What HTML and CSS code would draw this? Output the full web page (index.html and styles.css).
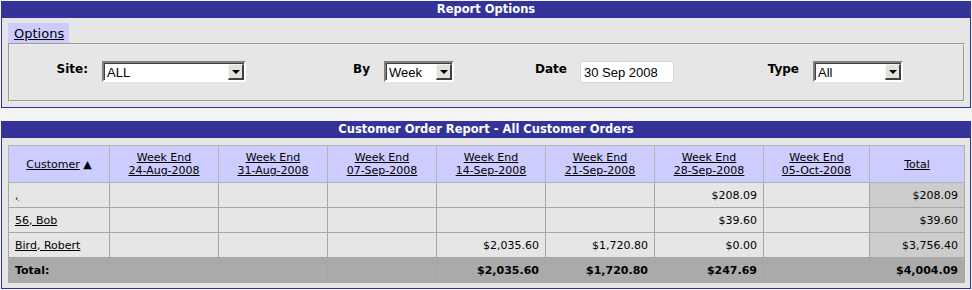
FILE: index.html
```html
<!DOCTYPE html>
<html lang="en">
<head>
    <meta charset="UTF-8">
    <title>Customer Order Report</title>
    <link rel="stylesheet" href="styles.css">
</head>
<body>

<div class="panel options-panel">
    <div class="panel-title">Report Options</div>
    <div class="panel-body">
        <div class="tab"><a href="#">Options</a></div>
        <div class="fieldset">
            <div class="filters">
                <label>Site:</label>
                <div><span class="dropdown dd-site"><span class="value">ALL</span><span class="btn"></span></span></div>
                <label>By</label>
                <div><span class="dropdown dd-by"><span class="value">Week</span><span class="btn"></span></span></div>
                <label>Date</label>
                <div><input class="date" type="text" value="30 Sep 2008"></div>
                <label>Type</label>
                <div><span class="dropdown dd-type"><span class="value">All</span><span class="btn"></span></span></div>
            </div>
        </div>
    </div>
</div>

<div class="panel report-panel">
    <div class="panel-title">Customer Order Report - All Customer Orders</div>
    <div class="panel-body">
        <table class="report">
            <colgroup>
                <col class="c-cust">
                <col class="c-week"><col class="c-week"><col class="c-week">
                <col class="c-week"><col class="c-week"><col class="c-week">
                <col class="c-last">
                <col class="c-total">
            </colgroup>
            <thead>
                <tr>
                    <th><a href="#">Customer</a> <span class="sort">&#9650;</span></th>
                    <th><a href="#">Week End<br>24-Aug-2008</a></th>
                    <th><a href="#">Week End<br>31-Aug-2008</a></th>
                    <th><a href="#">Week End<br>07-Sep-2008</a></th>
                    <th><a href="#">Week End<br>14-Sep-2008</a></th>
                    <th><a href="#">Week End<br>21-Sep-2008</a></th>
                    <th><a href="#">Week End<br>28-Sep-2008</a></th>
                    <th><a href="#">Week End<br>05-Oct-2008</a></th>
                    <th><a href="#">Total</a></th>
                </tr>
            </thead>
            <tbody>
                <tr>
                    <td class="name"><a href="#">,</a></td>
                    <td></td><td></td><td></td><td></td><td></td>
                    <td>$208.09</td>
                    <td></td>
                    <td class="total">$208.09</td>
                </tr>
                <tr>
                    <td class="name"><a href="#">56, Bob</a></td>
                    <td></td><td></td><td></td><td></td><td></td>
                    <td>$39.60</td>
                    <td></td>
                    <td class="total">$39.60</td>
                </tr>
                <tr>
                    <td class="name"><a href="#">Bird, Robert</a></td>
                    <td></td><td></td><td></td>
                    <td>$2,035.60</td>
                    <td>$1,720.80</td>
                    <td>$0.00</td>
                    <td></td>
                    <td class="total">$3,756.40</td>
                </tr>
                <tr class="sum">
                    <td class="name">Total:</td>
                    <td></td><td></td><td></td>
                    <td>$2,035.60</td>
                    <td>$1,720.80</td>
                    <td>$247.69</td>
                    <td></td>
                    <td>$4,004.09</td>
                </tr>
            </tbody>
        </table>
    </div>
</div>

</body>
</html>
```

FILE: styles.css
```css
body {
    margin: 1px 1px 0 1px;
    font-family: "DejaVu Sans", Verdana, sans-serif;
    font-size: 11px;
    color: #000;
    background: #f4f4f4;
}
a {
    color: #000;
}
.panel {
    border: 1px solid #333399;
    background: #e6e6e6;
}
.panel-title {
    background: #333399;
    color: #fff;
    font-weight: bold;
    font-size: 11.5px;
    text-align: center;
    height: 16px;
    line-height: 15px;
}
.options-panel .panel-body {
    padding: 5px 5px 5px 6px;
}
.report-panel {
    margin-top: 13px;
}
.report-panel .panel-body {
    padding: 7px 4px 5px 6px;
}

/* options tab + fieldset */
.tab {
    display: inline-block;
    background: #ccccff;
    font-size: 13px;
    height: 20px;
    line-height: 21px;
    padding: 0 5px 0 6px;
}
.fieldset {
    border: 2px groove #eeeeee;
    height: 55px;
}
.filters {
    display: grid;
    grid-template-columns: 92px 251px 31px 151px 45px 187px 46px auto;
    align-items: start;
    padding-top: 16px;
}
.filters label {
    font-weight: bold;
    font-size: 12px;
    text-align: right;
    padding-right: 14px;
    line-height: 16px;
}

/* old style drop downs */
.dropdown {
    display: flex;
    height: 17px;
    background: #fff;
    border-style: solid;
    border-width: 2px;
    border-color: #808080 #ffffff #ffffff #808080;
    box-shadow: inset 1px 1px 0 #404040;
    font-family: "Liberation Sans", Arial, sans-serif;
    font-size: 13px;
}
.dropdown .value {
    flex: 1;
    line-height: 19px;
    padding-left: 3px;
}
.dropdown .btn {
    width: 13px;
    height: 13px;
    margin-top: 1px;
    background: #e4e2dc;
    border-style: solid;
    border-width: 1px 2px 2px 1px;
    border-color: #f4f4f4 #404040 #404040 #f4f4f4;
    position: relative;
}
.dropdown .btn::after {
    content: "";
    position: absolute;
    left: 3px;
    top: 5px;
    border-left: 4px solid transparent;
    border-right: 4px solid transparent;
    border-top: 4px solid #000;
}
.dd-site { width: 140px; }
.dd-by { width: 66px; }
.dd-type { width: 86px; }
.date {
    width: 86px;
    height: 18px;
    border: 1px solid #d8d8d8;
    padding: 1px 3px;
    font-family: "Liberation Sans", Arial, sans-serif;
    font-size: 13px;
    margin: 0;
}

/* report table */
.report {
    width: 956px;
    border-collapse: collapse;
    table-layout: fixed;
    border: 1px solid #b4b4b4;
}
.c-cust { width: 101px; }
.c-week { width: 109px; }
.c-last { width: 106px; }
.c-total { width: 95px; }
.report th {
    background: #ccccff;
    font-weight: normal;
    height: 36px;
    padding: 0;
    border: 1px solid #b4b4b4;
    line-height: 13px;
}
.report th .sort {
    font-size: 11px;
}
.report td {
    height: 24px;
    padding: 0 6px;
    text-align: right;
    border: 1px solid #a6a6a6;
    background: #e6e6e6;
}
.report td.name {
    text-align: left;
}
.report td.total {
    background: #cccccc;
}
.report tr.sum td {
    background: #aaaaaa;
    font-weight: bold;
}
```
